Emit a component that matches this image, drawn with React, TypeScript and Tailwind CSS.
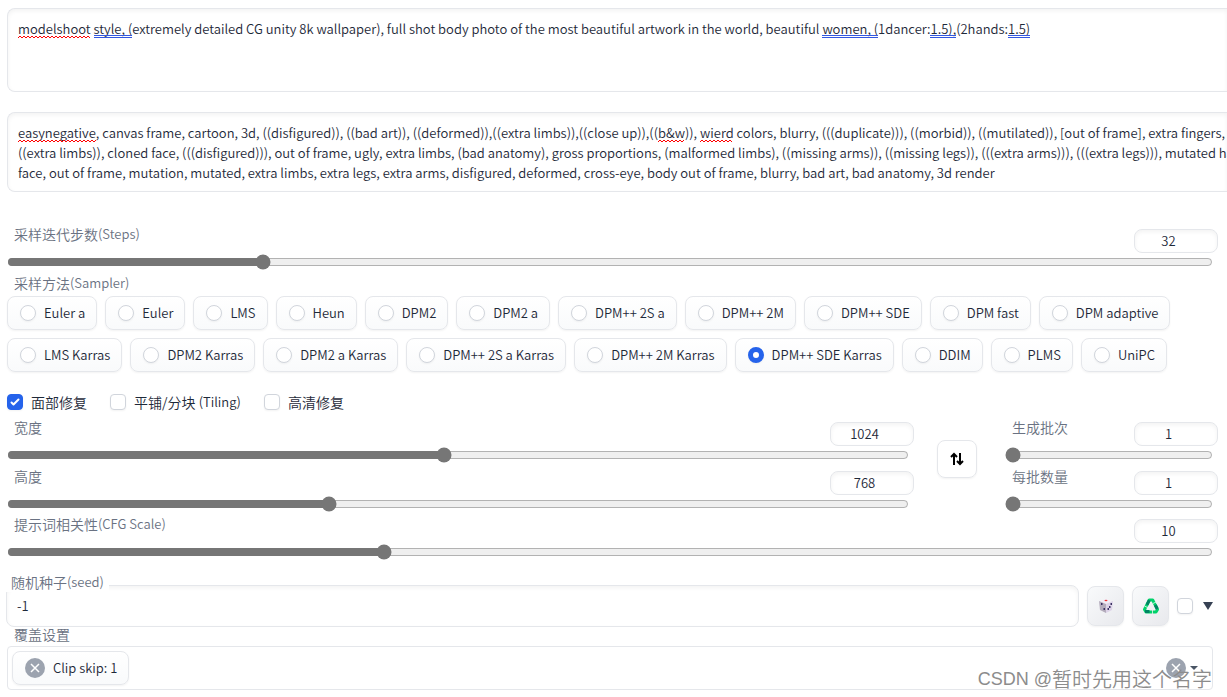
import { useState } from "react"
import type { ReactNode } from "react"
import { clsx } from "clsx"


interface ProofMark {
    x: number;
    width: number;
    kind: "spelling" | "grammar";
}

const prompt = "modelshoot style, (extremely detailed CG unity 8k wallpaper), full shot body photo of the most beautiful artwork in the world, beautiful women, (1dancer:1.5),(2hands:1.5)"

const promptMarks: ProofMark[] = [
    { x: 10, width: 73, kind: "spelling" },
    { x: 86, width: 38, kind: "grammar" },
    { x: 814, width: 56, kind: "grammar" },
    { x: 922, width: 26, kind: "grammar" },
    { x: 1000, width: 22, kind: "grammar" },
]

const negativePrompt = `easynegative, canvas frame, cartoon, 3d, ((disfigured)), ((bad art)), ((deformed)),((extra limbs)),((close up)),((b&w)), wierd colors, blurry, (((duplicate))), ((morbid)), ((mutilated)), [out of frame], extra fingers, mutated
((extra limbs)), cloned face, (((disfigured))), out of frame, ugly, extra limbs, (bad anatomy), gross proportions, (malformed limbs), ((missing arms)), ((missing legs)), (((extra arms))), (((extra legs))), mutated hands
face, out of frame, mutation, mutated, extra limbs, extra legs, extra arms, disfigured, deformed, cross-eye, body out of frame, blurry, bad art, bad anatomy, 3d render`

const negativeMarks: ProofMark[] = [
    { x: 10, width: 78, kind: "spelling" },
    { x: 650, width: 27, kind: "spelling" },
    { x: 692, width: 33, kind: "spelling" },
]

const samplers = [
    "Euler a", "Euler", "LMS", "Heun", "DPM2", "DPM2 a", "DPM++ 2S a", "DPM++ 2M", "DPM++ SDE", "DPM fast", "DPM adaptive",
    "LMS Karras", "DPM2 Karras", "DPM2 a Karras", "DPM++ 2S a Karras", "DPM++ 2M Karras", "DPM++ SDE Karras", "DDIM", "PLMS", "UniPC",
]


interface PromptBoxProps {
    label: string;
    text: string;
    marks: ProofMark[];
    className: string;
}

function squiggle(x: number, width: number) {
    let d = `M${x} 29`
    for (let i = 2; i <= width; i += 2) d += `L${x + i} ${i % 4 === 0 ? 29 : 27}`
    return d
}

function PromptBox(props: PromptBoxProps) {
    const [value, setValue] = useState(props.text)

    return (
        <div className={clsx("relative rounded-l-lg border border-r-0 border-gray-200 shadow-[inset_0_2px_4px_rgba(0,0,0,0.05)] overflow-hidden", props.className)}>
            <textarea
                aria-label={props.label}
                wrap="off"
                spellCheck={false}
                value={value}
                onChange={(e) => setValue(e.target.value)}
                className="block w-full h-full px-[10px] py-[10px] leading-5 text-gray-800 bg-transparent resize-none outline-none overflow-hidden"
            />
            {value === props.text && (
                <svg className="absolute inset-0 w-full h-8 pointer-events-none" fill="none">
                    {props.marks.map((m) => m.kind === "spelling"
                        ? <path key={m.x} d={squiggle(m.x, m.width)} stroke="#f00" />
                        : <path key={m.x} d={`M${m.x} 26.500h${m.width}M${m.x} 28.500h${m.width}`} stroke="#3357e0" />
                    )}
                </svg>
            )}
        </div>
    )
}


// Chinese runs are set one step larger than the Latin ones
function Mixed({ text }: { text: string }) {
    const cut = text.indexOf("(")
    const head = cut < 0 ? text : text.slice(0, cut)
    return (
        <span className="inline-flex items-center h-5 align-top whitespace-pre">
            <span className="text-sm leading-5">{head}</span>
            {cut >= 0 && <span>{text.slice(cut)}</span>}
        </span>
    )
}


interface SliderProps {
    id: string;
    label: string;
    min: number;
    max: number;
    initial: number;
}

function Slider(props: SliderProps) {
    const [value, setValue] = useState(props.initial)

    return (
        <div>
            <div className="flex items-start justify-between">
                <label htmlFor={props.id} className="h-5 pl-[6px] text-gray-500">
                    <Mixed text={props.label} />
                </label>
                <input
                    type="number"
                    aria-label={props.label}
                    value={value}
                    onChange={(e) => setValue(Number(e.target.value))}
                    className="w-[84px] h-6 mt-[5px] px-2 pb-0.5 text-center text-gray-800 rounded-lg border border-gray-200 shadow-[inset_0_2px_4px_rgba(0,0,0,0.05)] [appearance:textfield]"
                />
            </div>
            <div className="-ml-px pr-[5px] mt-px">
                <input
                    id={props.id}
                    type="range"
                    min={props.min}
                    max={props.max}
                    value={value}
                    onChange={(e) => setValue(Number(e.target.value))}
                    className="block w-full h-4 accent-[#767676]"
                />
            </div>
        </div>
    )
}


function CheckOption({ label, checked }: { label: string; checked?: boolean }) {
    return (
        <label className="flex items-center gap-2 text-gray-800">
            <Tick checked={checked} />
            <Mixed text={label} />
        </label>
    )
}

function Tick({ checked, label }: { checked?: boolean; label?: string }) {
    return (
        <span className="relative flex w-4 h-4 shrink-0">
            <input
                type="checkbox"
                aria-label={label}
                defaultChecked={checked}
                className="peer appearance-none w-4 h-4 rounded border border-gray-300 bg-white shadow-xs checked:bg-[#2563eb] checked:border-[#2563eb]"
            />
            <svg viewBox="0 0 16 16" fill="#fff" className="absolute inset-0 hidden peer-checked:block pointer-events-none">
                <path d="M12.207 4.793a1 1 0 0 1 0 1.414l-5 5a1 1 0 0 1-1.414 0l-2-2a1 1 0 0 1 1.414-1.414L6.5 9.086l4.293-4.293a1 1 0 0 1 1.414 0z" />
            </svg>
        </span>
    )
}


function ToolButton({ label, children }: { label: string; children: ReactNode }) {
    return (
        <button
            aria-label={label}
            className="flex items-center justify-center w-[37px] h-10 shrink-0 rounded-lg border border-gray-200 bg-gradient-to-br from-gray-50 to-[#e8e9ed] shadow-xs cursor-pointer"
        >
            {children}
        </button>
    )
}

function RemoveIcon() {
    return (
        <svg viewBox="0 0 20 20" className="w-5 h-5">
            <circle cx="10" cy="10" r="10" fill="#9ca3af" />
            <path d="M6 6l8 8M14 6l-8 8" stroke="#fff" strokeWidth="1.5" />
        </svg>
    )
}


export default function App() {
    const [sampler, setSampler] = useState("DPM++ SDE Karras")

    return (
        <main className="relative pt-2 pl-[7px] pb-2 bg-white overflow-hidden text-[13px] leading-5 font-[350] font-['Noto_Sans_CJK_SC',sans-serif]">
            {/* Prompts */}
            <PromptBox label="Prompt" text={prompt} marks={promptMarks} className="h-[84px]" />
            <PromptBox label="Negative prompt" text={negativePrompt} marks={negativeMarks} className="h-20 mt-5" />

            <div className="mt-8 pl-px pr-[9px]">
                <Slider id="steps" label="采样迭代步数(Steps)" min={1} max={150} initial={32} />
            </div>

            {/* Sampler */}
            <fieldset className="mt-[3px]">
                <legend className="h-5 pl-[7px] text-gray-500"><Mixed text="采样方法(Sampler)" /></legend>
                <div className="flex flex-wrap gap-2 mt-[3px] pr-10">
                    {samplers.map((name) => (
                        <label
                            key={name}
                            className="flex items-center gap-2 h-[34px] pl-3 pr-[11px] rounded-lg border border-gray-200 bg-gradient-to-b from-white to-gray-50 text-gray-800 whitespace-nowrap shadow-xs cursor-pointer"
                        >
                            <input
                                type="radio"
                                name="sampler"
                                checked={sampler === name}
                                onChange={() => setSampler(name)}
                                className="appearance-none w-4 h-4 rounded-full border border-gray-300 bg-white shadow-xs checked:border-[5px] checked:border-[#2563eb]"
                            />
                            {name}
                        </label>
                    ))}
                </div>
            </fieldset>

            <div className="flex gap-[23px] mt-5">
                <CheckOption label="面部修复" checked />
                <CheckOption label="平铺/分块 (Tiling)" />
                <CheckOption label="高清修复" />
            </div>

            {/* Size and batch */}
            <div className="flex mt-[5px] pl-px pr-[9px]">
                <div className="flex-1 space-y-[3px]">
                    <Slider id="width" label="宽度" min={64} max={2048} initial={1024} />
                    <Slider id="height" label="高度" min={64} max={2048} initial={768} />
                </div>
                <button
                    aria-label="⇅"
                    className="flex items-center justify-center w-10 h-[38px] mt-[23px] ml-[23px] mr-[29px] rounded-lg border border-gray-200 shadow-xs cursor-pointer"
                >
                    <svg viewBox="0 0 14 14" className="w-[14px] h-[14px]" fill="none" stroke="#000" strokeWidth="2">
                        <path d="M4 13V2M1 5l3-3 3 3M10 1v11M7 9l3 3 3-3" />
                    </svg>
                </button>
                <div className="w-[212px] space-y-[3px]">
                    <Slider id="count" label="生成批次" min={1} max={100} initial={1} />
                    <Slider id="size" label="每批数量" min={1} max={8} initial={1} />
                </div>
            </div>

            <div className="mt-[2px] pl-px pr-[9px]">
                <Slider id="cfg" label="提示词相关性(CFG Scale)" min={1} max={30} initial={10} />
            </div>

            {/* Seed */}
            <div className="flex items-center gap-2 mt-[25px] -ml-px pr-[14px]">
                <div className="relative flex-1">
                    <label htmlFor="seed" className="absolute left-0 -top-[13px] px-[5px] bg-white text-gray-500">
                        <Mixed text="随机种子(seed)" />
                    </label>
                    <input
                        id="seed"
                        type="text"
                        defaultValue="-1"
                        className="block w-full h-[42px] px-[10px] pb-0.5 rounded-lg border border-gray-200 text-gray-800 shadow-[inset_0_2px_4px_rgba(0,0,0,0.05)]"
                    />
                </div>
                <ToolButton label="🎲">
                    <svg viewBox="0 0 16 16" className="w-4 h-4">
                        <path d="M8 1l6 2-6 3-6-3z" fill="#f4eef8" />
                        <path d="M1 3l7 3v9l-6-3z" fill="#b4acbc" />
                        <path d="M15 3L8 6v9l6-3z" fill="#ddd3e8" />
                        <ellipse cx="8" cy="2.5" rx="1.5" ry="0.7" fill="#e33" />
                        <path d="M3 5h1.500v2H3zM5.500 10H7v2H5.500zM9.500 10H11v2H9.500zM11 8h1.500v2H11zM12.500 5H14v2h-1.500z" fill="#3b3163" />
                    </svg>
                </ToolButton>
                <ToolButton label="♻️">
                    <svg viewBox="0 0 16 16" className="w-4 h-4" fill="none" strokeWidth="3">
                        <path d="M6.300 2h3.400L14.500 11.500 13 14H3L1.500 11.500z" stroke="#00d26a" strokeLinejoin="round" />
                        <path d="M4 6.800L6.300 2.200M12.300 7l2 4M2 13.500h4.500" stroke="#008463" />
                        <path d="M8 5.200l3.500 6.300h-7z" fill="#f0f1f3" />
                        <path d="M10 5.500l3-1.500M1.500 8l3 1.500M9.500 11.500V16" stroke="#f0f1f3" strokeWidth="0.8" />
                    </svg>
                </ToolButton>
                <Tick label="Extra" />
                <svg aria-hidden="true" viewBox="0 0 12 10" className="w-3 h-[10px] fill-gray-700">
                    <path d="M2 1h10L7 9z" />
                </svg>
            </div>

            {/* Override settings */}
            <div className="-mt-[3px] pr-[14px]">
                <div className="h-5 pl-[7px] text-gray-500"><Mixed text="覆盖设置" /></div>
                <div className="flex items-center h-11 mt-[2px] px-1 rounded border border-gray-200">
                    <button className="flex items-center gap-2 h-[34px] pl-3 pr-[11px] rounded-lg border border-gray-200 bg-gradient-to-b from-white to-gray-50 text-gray-800 shadow-xs cursor-pointer">
                        <RemoveIcon />
                        Clip skip: 1
                    </button>
                    <button aria-label="Clear" className="ml-auto cursor-pointer"><RemoveIcon /></button>
                    <span aria-hidden="true" className="w-2 h-1 ml-1 mr-[10px] bg-gray-600 [clip-path:polygon(0_0,100%_0,50%_100%)]" />
                </div>
            </div>

            {/* Watermark */}
            <div className="absolute right-[15px] bottom-[5px] flex items-center text-xl leading-7 text-[#8c8c8c] whitespace-pre pointer-events-none">
                <span className="text-lg leading-7 font-['Liberation_Sans',sans-serif]">CSDN @</span>
                <span>暂时先用这个名字</span>
            </div>
        </main>
    )
}
